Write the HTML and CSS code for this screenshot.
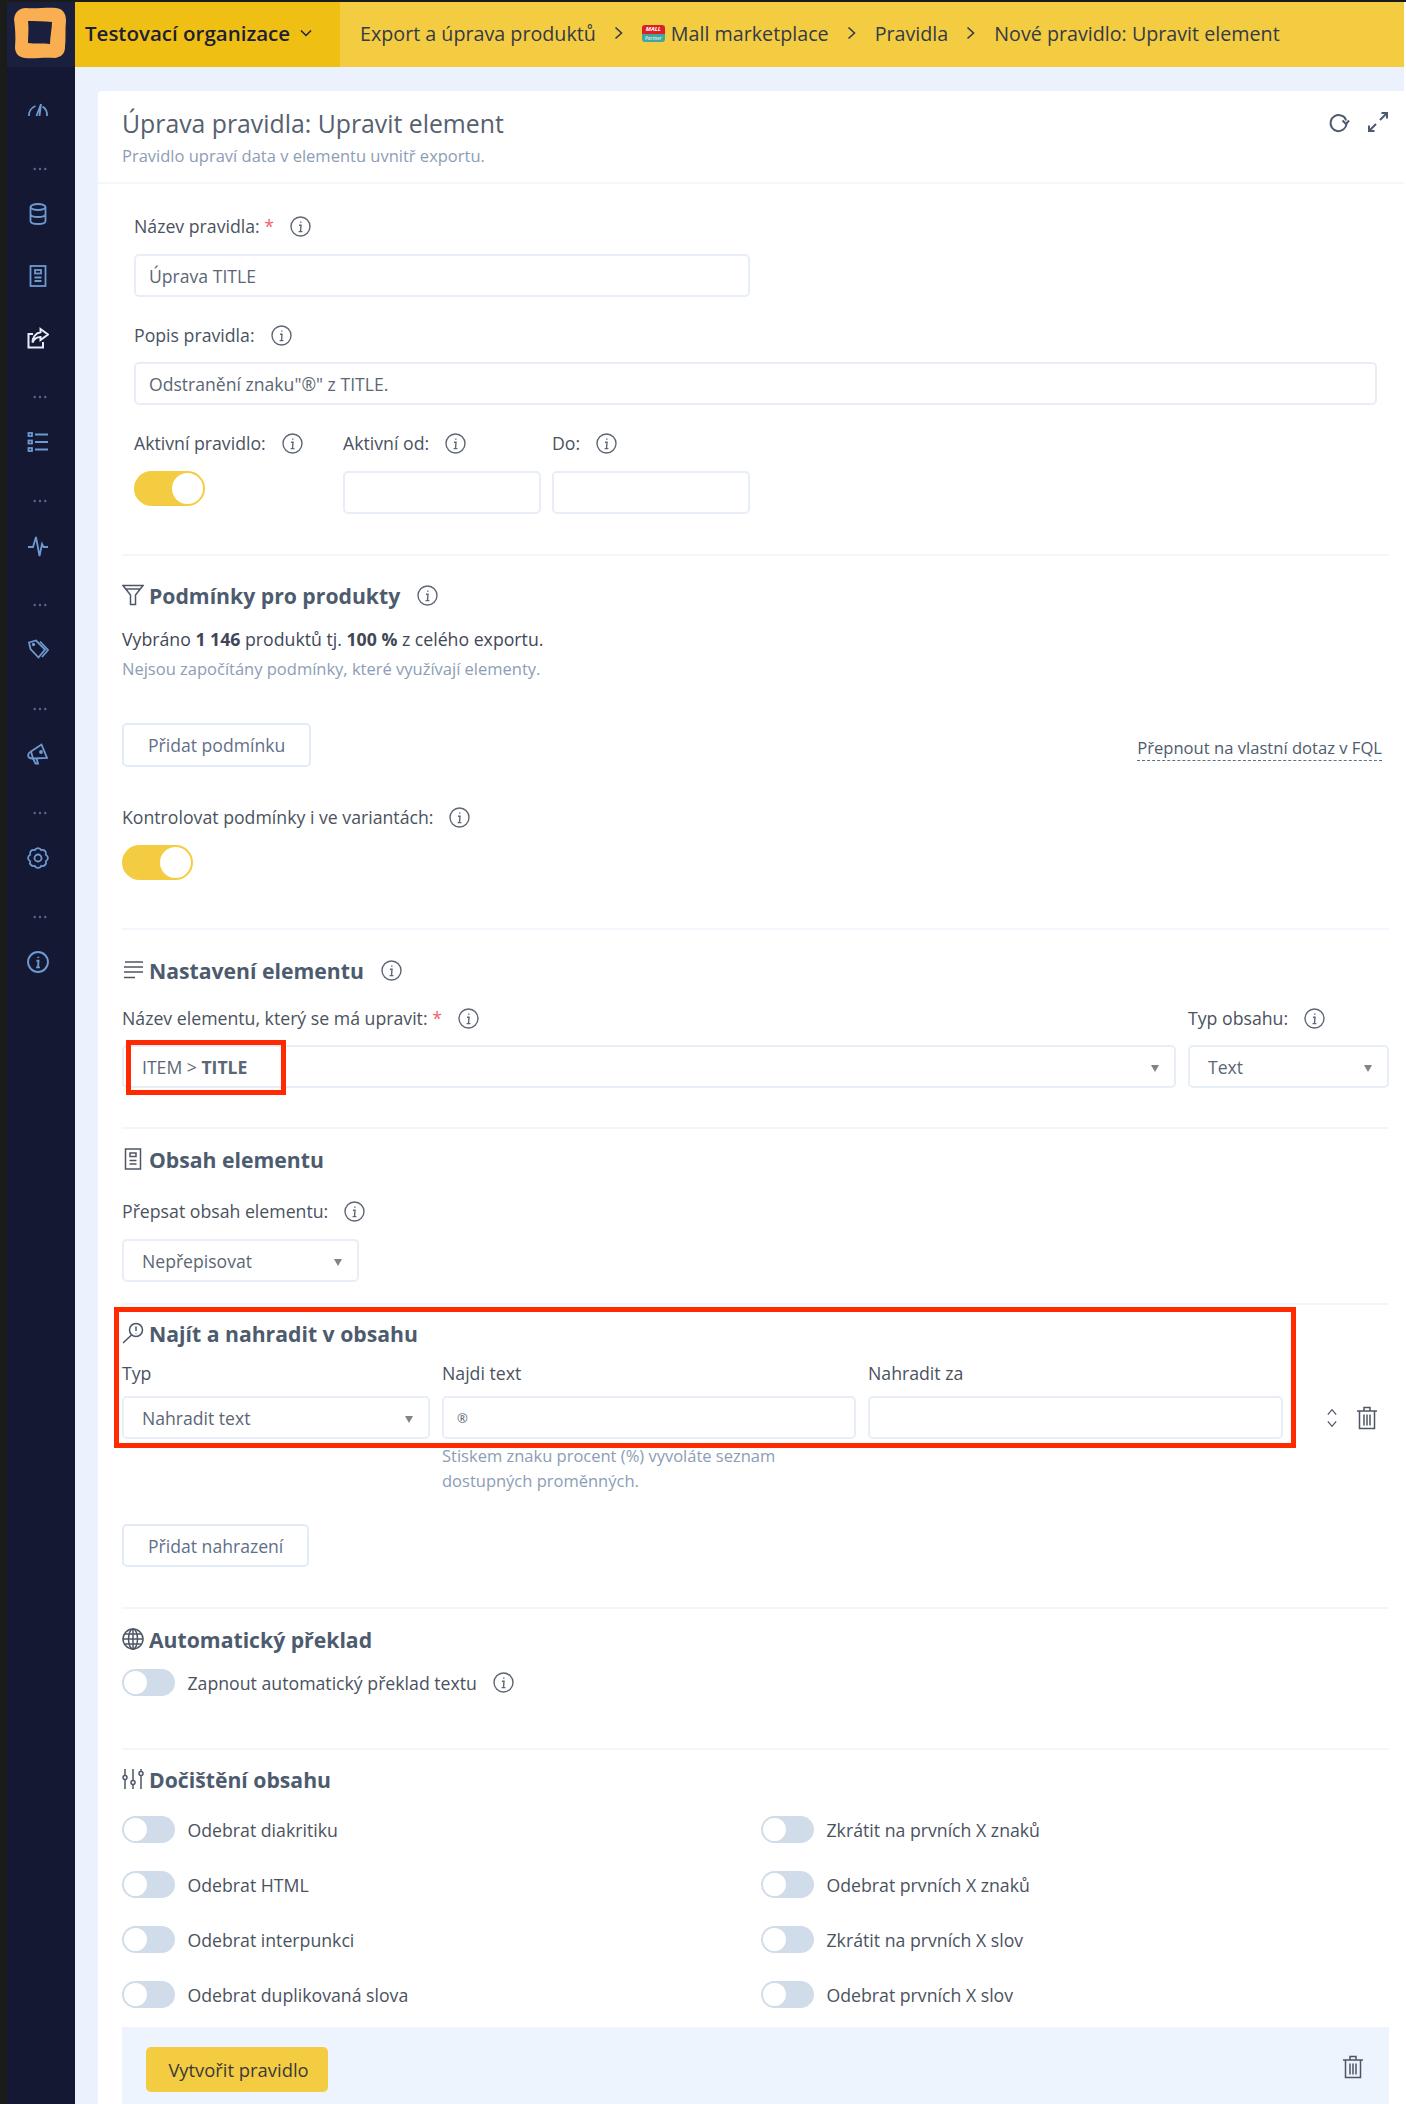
FILE: index.html
```html
<!DOCTYPE html>
<html lang="cs">
<head>
  <meta charset="UTF-8" />
  <title>Nové pravidlo: Upravit element</title>
  <link rel="stylesheet" href="styles.css">
</head>
<body>

<svg class="sprite" xmlns="http://www.w3.org/2000/svg">
  <symbol id="i-info" viewBox="0 0 21 21"><circle cx="10.5" cy="10.5" r="9.5"/><path d="M10.8 5.4v1.3M9 9.3h2l-.5 6.2M8.6 15.6h3.8"/></symbol>
  <symbol id="i-gauge" viewBox="0 0 22 22"><path d="M2 17a10 10 0 0 1 6.500-10M15.500 7.500a10 10 0 0 1 4.500 9.500M9.500 17 14 5M12.500 17 14 5"/></symbol>
  <symbol id="i-db" viewBox="0 0 22 22"><ellipse cx="11" cy="4" rx="7.500" ry="3"/><path d="M3.500 4v14c0 1.800 3.300 3 7.500 3s7.500-1.200 7.500-3V4M3.500 11c0 1.800 3.300 3 7.500 3s7.500-1.200 7.500-3"/></symbol>
  <symbol id="i-doc" viewBox="0 0 22 22"><rect x="3.500" y="1" width="15" height="20"/><rect x="8" y="5" width="6" height="3.500"/><path d="M7.500 12.500h7M7.500 16h7"/></symbol>
  <symbol id="i-share" viewBox="0 0 22 22"><path d="M13.500 2 21 7.500 13.500 13v-3C9.500 10 7 12 5.500 15.500 5.500 10.500 8.500 6 13.500 5.200z"/><path d="M6 7H1.500v13.500H16V15"/></symbol>
  <symbol id="i-list" viewBox="0 0 22 22"><rect x="1.500" y="2" width="3.500" height="3"/><rect x="1.500" y="9.500" width="3.500" height="3"/><rect x="1.500" y="17" width="3.500" height="3"/><path d="M8 3.500h13M8 11h13M8 18.500h13"/></symbol>
  <symbol id="i-pulse" viewBox="0 0 22 22"><path d="M1 12h5l3-10 3.500 19L15 9l1.500 3H21"/></symbol>
  <symbol id="i-tag" viewBox="0 0 22 22"><path d="M2 3.500 9 1.500l9 9-6.500 8L3.500 10z"/><path d="M13 2.500l8 8.500-6 7"/><circle cx="6.500" cy="5.500" r=".8"/></symbol>
  <symbol id="i-mega" viewBox="0 0 22 22"><path d="M14.500 1.500 20 15 6 15.500 4 8.500z"/><path d="M4 8.500C1 10 .5 13 2 14.500c1 1 2.500 1 4 1M6 15.500l2.500 5h2.500L9.500 15.500"/><circle cx="14" cy="9" r="1"/></symbol>
  <symbol id="i-gear" viewBox="0 0 22 22"><path d="M18.850 14.250A3.600 3.600 0 0 1 14.250 18.850 3.600 3.600 0 0 1 7.750 18.850 3.600 3.600 0 0 1 3.150 14.250 3.600 3.600 0 0 1 3.150 7.750 3.600 3.600 0 0 1 7.750 3.150 3.600 3.600 0 0 1 14.250 3.150 3.600 3.600 0 0 1 18.850 7.750 3.600 3.600 0 0 1 18.850 14.250z"/><circle cx="11" cy="11" r="3.500"/></symbol>
  <symbol id="i-dots" viewBox="0 0 16 4"><circle cx="2" cy="2" r="1.400"/><circle cx="8" cy="2" r="1.400"/><circle cx="14" cy="2" r="1.400"/></symbol>
  <symbol id="i-funnel" viewBox="0 0 22 22"><path d="M1 1.500h20L13.500 11v9.500h-5V11zM4 5h14"/></symbol>
  <symbol id="i-lines" viewBox="0 0 22 22"><path d="M3 3h18M2 8h19M2 13h19M2 18.500h11" /></symbol>
  <symbol id="i-search" viewBox="0 0 22 22"><circle cx="14" cy="8" r="6.500"/><path d="M9.500 13 1 21M14 4.500V9M14 11v.5"/></symbol>
  <symbol id="i-globe" viewBox="0 0 22 22"><circle cx="11" cy="11" r="10"/><ellipse cx="11" cy="11" rx="4.500" ry="10"/><path d="M11 1v20M1 11h20M2.500 6h17M2.500 16h17"/></symbol>
  <symbol id="i-sliders" viewBox="0 0 22 22"><path d="M3 1v6M3 12v9M11 1v11M11 17v4M19 1v2M19 8v13"/><circle cx="3" cy="9.500" r="2"/><circle cx="11" cy="14.500" r="2"/><circle cx="19" cy="5.500" r="2"/></symbol>
  <symbol id="i-trash" viewBox="0 0 22 24"><path d="M1 5h20M8 5V1.500h6V5M3.500 5v17.500h15V5M8 8.500v11M11 8.500v11M14 8.500v11"/></symbol>
  <symbol id="i-updown" viewBox="0 0 14 24"><path d="M2 8l5-6 5 6M2 16l5 6 5-6"/></symbol>
  <symbol id="i-refresh" viewBox="0 0 22 22"><path d="M18.500 13A8 8 0 1 1 13 4.500c2.500.5 4.500 2.500 5 5"/><path d="M14.500 9.500l3.500 3.500 3-3.500"/></symbol>
  <symbol id="i-expand" viewBox="0 0 22 22"><path d="M2 20 9 13M13 9l7-7M14.500 2H20v5.500M2 14.500V20h5.500"/></symbol>
</svg>

<div class="screen">
  <aside class="sidebar">
    <div class="logo-box">
      <svg class="logo" viewBox="0 0 52 52"><path fill-rule="evenodd" d="M12 1C22 2 34 0 42 1c7 1 10 5 10 13-1 8 0 18-1 26 0 7-4 10-10 11-11-1-21 1-30 0-7-1-10-5-10-11C2 30 1 20 0 12 1 5 5 1 12 1zM14 14c1 7 0 15 0 22 7 1 15 0 22 1 0-8 2-15 2-22-8-1-17-1-24-1z"/></svg>
    </div>
    <nav class="side-nav">
      <svg class="side-icon"><use href="#i-gauge"/></svg>
      <svg class="side-dots"><use href="#i-dots"/></svg>
      <svg class="side-icon"><use href="#i-db"/></svg>
      <svg class="side-icon"><use href="#i-doc"/></svg>
      <svg class="side-icon active"><use href="#i-share"/></svg>
      <svg class="side-dots"><use href="#i-dots"/></svg>
      <svg class="side-icon"><use href="#i-list"/></svg>
      <svg class="side-dots"><use href="#i-dots"/></svg>
      <svg class="side-icon"><use href="#i-pulse"/></svg>
      <svg class="side-dots"><use href="#i-dots"/></svg>
      <svg class="side-icon"><use href="#i-tag"/></svg>
      <svg class="side-dots"><use href="#i-dots"/></svg>
      <svg class="side-icon"><use href="#i-mega"/></svg>
      <svg class="side-dots"><use href="#i-dots"/></svg>
      <svg class="side-icon"><use href="#i-gear"/></svg>
      <svg class="side-dots"><use href="#i-dots"/></svg>
      <svg class="side-icon"><use href="#i-info"/></svg>
    </nav>
  </aside>

  <div class="main">
    <header class="topbar">
      <div class="org">Testovací organizace <svg class="org-caret" viewBox="0 0 12 8"><path d="M1 1.500 6 6.500l5-5"/></svg></div>
      <div class="crumbs">
        <span>Export a úprava produktů</span>
        <svg class="crumb-sep" viewBox="0 0 9 14"><path d="M1.500 1.500 7.500 7l-6 5.500"/></svg>
        <span class="mall"><span class="mall-badge"><b>MALL</b><i>Partner</i></span>Mall marketplace</span>
        <svg class="crumb-sep" viewBox="0 0 9 14"><path d="M1.500 1.500 7.500 7l-6 5.500"/></svg>
        <span>Pravidla</span>
        <svg class="crumb-sep" viewBox="0 0 9 14"><path d="M1.500 1.500 7.500 7l-6 5.500"/></svg>
        <span>Nové pravidlo: Upravit element</span>
      </div>
    </header>

    <div class="content">
      <div class="card">
        <div class="card-head">
          <div>
            <h1>Úprava pravidla: Upravit element</h1>
            <p class="subtitle">Pravidlo upraví data v elementu uvnitř exportu.</p>
          </div>
          <div class="head-tools">
            <svg class="tool"><use href="#i-refresh"/></svg>
            <svg class="tool"><use href="#i-expand"/></svg>
          </div>
        </div>

        <section class="sec sec-basic">
          <label class="lbl">Název pravidla: <span class="req">*</span><svg class="info"><use href="#i-info"/></svg></label>
          <input class="inp inp-name" type="text" value="Úprava TITLE" />
          <label class="lbl lbl-next">Popis pravidla:<svg class="info"><use href="#i-info"/></svg></label>
          <input class="inp inp-desc" type="text" value='Odstranění znaku"®" z TITLE.' />
          <div class="active-row">
            <div>
              <label class="lbl">Aktivní pravidlo:<svg class="info"><use href="#i-info"/></svg></label>
              <div class="toggle on"></div>
            </div>
            <div>
              <label class="lbl">Aktivní od:<svg class="info"><use href="#i-info"/></svg></label>
              <input class="inp" type="text" />
            </div>
            <div>
              <label class="lbl">Do:<svg class="info"><use href="#i-info"/></svg></label>
              <input class="inp" type="text" />
            </div>
          </div>
        </section>

        <section class="sec sec-cond">
          <h2><svg class="h-icon"><use href="#i-funnel"/></svg>Podmínky pro produkty<svg class="info"><use href="#i-info"/></svg></h2>
          <p class="picked">Vybráno <b>1 146</b> produktů tj. <b>100 %</b> z celého exportu.</p>
          <p class="note">Nejsou započítány podmínky, které využívají elementy.</p>
          <div class="btn-row">
            <button class="btn">Přidat podmínku</button>
            <a class="fql">Přepnout na vlastní dotaz v FQL</a>
          </div>
          <label class="lbl lbl-variants">Kontrolovat podmínky i ve variantách:<svg class="info"><use href="#i-info"/></svg></label>
          <div class="toggle on"></div>
        </section>

        <section class="sec sec-element">
          <h2><svg class="h-icon"><use href="#i-lines"/></svg>Nastavení elementu<svg class="info"><use href="#i-info"/></svg></h2>
          <div class="element-row">
            <div>
              <label class="lbl">Název elementu, který se má upravit: <span class="req">*</span><svg class="info"><use href="#i-info"/></svg></label>
              <div class="select"><span>ITEM &gt; <b>TITLE</b></span><span class="mark mark-item"></span></div>
            </div>
            <div>
              <label class="lbl">Typ obsahu:<svg class="info"><use href="#i-info"/></svg></label>
              <div class="select">Text</div>
            </div>
          </div>
        </section>

        <section class="sec sec-content">
          <h2><svg class="h-icon"><use href="#i-doc"/></svg>Obsah elementu</h2>
          <label class="lbl lbl-rewrite">Přepsat obsah elementu:<svg class="info"><use href="#i-info"/></svg></label>
          <div class="select select-rewrite">Nepřepisovat</div>
        </section>

        <section class="sec sec-replace">
          <span class="mark mark-replace"></span>
          <h2><svg class="h-icon"><use href="#i-search"/></svg>Najít a nahradit v obsahu</h2>
          <div class="replace-grid">
            <label class="lbl">Typ</label>
            <label class="lbl">Najdi text</label>
            <label class="lbl">Nahradit za</label>
            <span></span>
            <div class="select">Nahradit text</div>
            <input class="inp inp-sm" type="text" value="®" />
            <input class="inp" type="text" />
            <div class="replace-tools">
              <svg class="updown"><use href="#i-updown"/></svg>
              <svg class="trash"><use href="#i-trash"/></svg>
            </div>
            <p class="hint">Stiskem znaku procent (%) vyvoláte seznam dostupných proměnných.</p>
          </div>
          <button class="btn btn-add">Přidat nahrazení</button>
        </section>

        <section class="sec sec-translate">
          <h2><svg class="h-icon"><use href="#i-globe"/></svg>Automatický překlad</h2>
          <div class="switch-row"><div class="toggle"></div>Zapnout automatický překlad textu<svg class="info"><use href="#i-info"/></svg></div>
        </section>

        <section class="sec sec-clean">
          <h2><svg class="h-icon"><use href="#i-sliders"/></svg>Dočištění obsahu</h2>
          <div class="clean-grid">
            <div class="switch-row"><div class="toggle"></div>Odebrat diakritiku</div>
            <div class="switch-row"><div class="toggle"></div>Zkrátit na prvních X znaků</div>
            <div class="switch-row"><div class="toggle"></div>Odebrat HTML</div>
            <div class="switch-row"><div class="toggle"></div>Odebrat prvních X znaků</div>
            <div class="switch-row"><div class="toggle"></div>Odebrat interpunkci</div>
            <div class="switch-row"><div class="toggle"></div>Zkrátit na prvních X slov</div>
            <div class="switch-row"><div class="toggle"></div>Odebrat duplikovaná slova</div>
            <div class="switch-row"><div class="toggle"></div>Odebrat prvních X slov</div>
          </div>
        </section>

        <footer class="card-foot">
          <button class="btn-primary">Vytvořit pravidlo</button>
          <svg class="trash"><use href="#i-trash"/></svg>
        </footer>
      </div>
    </div>
  </div>
</div>

</body>
</html>
```

FILE: styles.css
```css
* {
  box-sizing: border-box;
}
html, body {
  margin: 0;
  height: 2104px;
  overflow: hidden;
}
body {
  font-family: "Open Sans", sans-serif;
  font-size: 17.7px;
  color: #4a5260;
  background: #1a1c1a;
}
.sprite {
  display: none;
}
svg {
  fill: none;
  stroke: currentColor;
  stroke-width: 1.5;
  flex: none;
}
.screen {
  display: flex;
  height: 2104px;
  padding: 2px 0 0 7px;
}

/* Sidebar */
.sidebar {
  flex: none;
  width: 68px;
  background: #141832;
}
.logo-box {
  height: 65px;
  background: #1b1f3e;
  padding: 5px 0 0 7px;
}
.logo {
  width: 52px;
  height: 52px;
  fill: #f9ae52;
  stroke: none;
}
.side-nav {
  display: flex;
  flex-direction: column;
  padding: 32px 0 0 20px;
}
.side-icon {
  width: 22px;
  height: 22px;
  color: #6d9ad0;
  stroke-width: 1.8;
}
.side-icon + .side-icon {
  margin-top: 40px;
}
.side-icon.active {
  color: #e4ecf7;
  stroke-width: 2;
}
.side-dots {
  width: 14px;
  height: 6px;
  margin: 44.5px 0 31.5px 6px;
  fill: #56658c;
  stroke: none;
}

/* Top bar */
.main {
  flex: 1;
  min-width: 0;
  display: flex;
  flex-direction: column;
  border-right: 2px solid #fff;
  background: #ecf2fd;
}
.topbar {
  flex: none;
  display: flex;
  height: 65px;
  background: #f4cc42;
  font-size: 19.7px;
  color: #343a46;
}
.org {
  width: 265px;
  padding: 0 0 3px 10px;
  display: flex;
  align-items: center;
  background: #f0bf14;
  font-weight: 600;
  font-size: 20.5px;
  color: #1c2033;
  white-space: nowrap;
}
.org-caret {
  width: 12px;
  height: 8px;
  margin-left: 10px;
}
.crumbs {
  display: flex;
  align-items: center;
  padding: 0 0 3px 20px;
  white-space: nowrap;
}
.crumb-sep {
  width: 9px;
  height: 14px;
  margin: 0 19px 0 18px;
  stroke-width: 1.6;
}
.mall {
  display: flex;
  align-items: center;
}
.mall-badge {
  width: 23px;
  height: 17px;
  margin-right: 6px;
  display: flex;
  flex-direction: column;
  border-radius: 3px;
  overflow: hidden;
  line-height: 8px;
  text-align: center;
  color: #fff;
}
.mall-badge b {
  height: 9px;
  background: #dc2027;
  font-size: 6px;
  font-style: italic;
}
.mall-badge i {
  height: 8px;
  background: #3fa7a0;
  font-size: 5px;
}

/* Card */
.content {
  flex: 1;
  min-height: 0;
  padding: 24px 0 0 23px;
}
.card {
  background: #fff;
  border-radius: 4px 0 0 0;
  padding: 0 15px 0 24px;
}
.card-head {
  display: flex;
  justify-content: space-between;
  height: 93px;
  margin: 0 -15px 0 -24px;
  padding: 19px 15px 0 24px;
  border-bottom: 2px solid #f3f6fc;
}
h1 {
  margin: 0;
  font-size: 24.8px;
  line-height: 26px;
  font-weight: 400;
  color: #56606f;
}
.subtitle {
  margin: 9px 0 0;
  font-size: 16.5px;
  line-height: 22px;
  color: #8c9db5;
}
.head-tools {
  display: flex;
  gap: 17px;
  color: #4d5a70;
}
.tool {
  width: 22px;
  height: 22px;
  margin-top: 1px;
  stroke-width: 2;
}

/* Sections */
.sec {
  position: relative;
  border-bottom: 2px solid #f3f6fc;
}
h2 {
  display: flex;
  align-items: center;
  margin: 0;
  height: 28px;
  font-size: 21.2px;
  font-weight: 700;
  color: #4d5b6e;
}
h2 .info {
  margin-left: 17px;
}
.h-icon {
  width: 22px;
  height: 22px;
  margin-right: 5px;
  color: #4d5566;
}
.lbl {
  display: flex;
  align-items: center;
  height: 22px;
  padding-bottom: 2px;
  margin-bottom: 16px;
  white-space: pre;
  color: #4a5260;
}
.req {
  color: #f0636b;
}
.info {
  width: 21px;
  height: 21px;
  margin-left: 16px;
  color: #5d6675;
  stroke-width: 1.4;
}
.inp, .select {
  display: block;
  width: 100%;
  height: 43px;
  border: 2px solid #e8eef8;
  border-radius: 5px;
  background: #fff;
  font: 17.6px "Open Sans", sans-serif;
  color: #5c6675;
}
.inp {
  padding: 0 13px;
}
.select {
  position: relative;
  display: flex;
  align-items: center;
  padding: 0 18px;
}
.select::after {
  content: "";
  position: absolute;
  right: 15px;
  top: 18px;
  border: 4.500px solid transparent;
  border-top: 7px solid #80848a;
  border-bottom: 0;
}
.btn {
  height: 44px;
  padding: 0 24px;
  border: 2px solid #e3ebf7;
  border-radius: 5px;
  background: #fff;
  font: 17.6px "Open Sans", sans-serif;
  color: #5f6f88;
}
.toggle {
  position: relative;
  flex: none;
  width: 53px;
  height: 27px;
  border-radius: 14px;
  background: #d0dcea;
}
.toggle::after {
  content: "";
  position: absolute;
  left: 2px;
  top: 2px;
  width: 23px;
  height: 23px;
  border-radius: 50%;
  background: #fff;
}
.toggle.on {
  width: 71px;
  height: 35px;
  border-radius: 18px;
  background: #f4cc42;
}
.toggle.on::after {
  left: auto;
  right: 2px;
  width: 31px;
  height: 31px;
}

/* Highlight frames drawn over the screenshot */
.mark {
  position: absolute;
  border: 5px solid #ff2a00;
  pointer-events: none;
}
.mark-item {
  left: 2px;
  top: -7px;
  width: 160px;
  height: 55px;
}
.mark-replace {
  left: -8px;
  top: 2px;
  width: 1182px;
  height: 141px;
}

.sec-basic {
  padding: 32px 0 40px 12px;
}
.inp-name {
  width: 616px;
}
.inp-desc {
  width: 1243px;
}
.lbl-next {
  margin: 28px 0 15px;
}
.active-row {
  display: grid;
  grid-template-columns: repeat(3, 198px);
  column-gap: 11px;
  margin-top: 28px;
}

.sec-cond {
  padding: 25px 0 48px;
}
.picked {
  margin: 18px 0 0;
  line-height: 24px;
  color: #3f4757;
}
.picked b {
  font-weight: 700;
}
.note {
  margin: 7px 0 0;
  font-size: 16.5px;
  line-height: 22px;
  color: #8c9db5;
}
.btn-row {
  display: flex;
  justify-content: space-between;
  align-items: center;
  margin-top: 43px;
  padding-right: 7px;
}
.fql {
  padding: 3px 0 1px;
  margin-top: 4px;
  border-bottom: 1px dashed #5f6f88;
  font-size: 16.6px;
  color: #4d5b6e;
}
.lbl-variants {
  margin-top: 40px;
}

.sec-element {
  padding: 26px 0 39px;
}
.element-row {
  display: grid;
  grid-template-columns: 1fr 201px;
  column-gap: 12px;
  margin-top: 24px;
}
.element-row .lbl {
  margin-bottom: 15px;
}

.sec-content {
  padding: 16px 0 21px;
}
.lbl-rewrite {
  margin-top: 28px;
}
.select-rewrite {
  width: 237px;
}

.sec-replace {
  padding: 14px 0 40px;
}
.replace-grid {
  display: grid;
  grid-template-columns: 308px 414px 415px 1fr;
  column-gap: 12px;
  margin-top: 16px;
}
.replace-grid .lbl {
  margin-bottom: 11px;
}
.inp-sm {
  font-size: 13px;
}
.replace-tools {
  display: flex;
  align-items: center;
  justify-content: flex-end;
  gap: 17px;
  padding-right: 11px;
  color: #4d5566;
}
.updown {
  width: 14px;
  height: 20px;
}
.trash {
  width: 22px;
  height: 24px;
  color: #4d5566;
}
.hint {
  grid-column: 2;
  margin: 4px 0 0;
  font-size: 16.5px;
  line-height: 25px;
  color: #8c9db5;
}
.btn-add {
  display: block;
  height: 43px;
  margin-top: 31px;
}

.sec-translate {
  padding: 16px 0 52px;
}
.sec-translate .switch-row {
  margin-top: 16px;
}
.switch-row {
  display: flex;
  align-items: center;
  gap: 12.5px;
  height: 27px;
  color: #4a5260;
}
.switch-row .info {
  margin-left: 4px;
}

.sec-clean {
  padding: 15px 0 19px;
  border-bottom: 0;
}
.clean-grid {
  display: grid;
  grid-template-columns: 639px 1fr;
  row-gap: 28px;
  margin-top: 23px;
}

.card-foot {
  display: flex;
  justify-content: space-between;
  align-items: flex-start;
  height: 77px;
  padding: 20px 25px 0 24px;
  background: #eef4fd;
}
.card-foot .trash {
  margin-top: 8px;
}
.btn-primary {
  height: 45px;
  width: 182px;
  padding-left: 9px;
  border: 0;
  border-radius: 5px;
  background: #f4cc42;
  font: 18.4px "Open Sans", sans-serif;
  color: #3a3a3a;
}
```
